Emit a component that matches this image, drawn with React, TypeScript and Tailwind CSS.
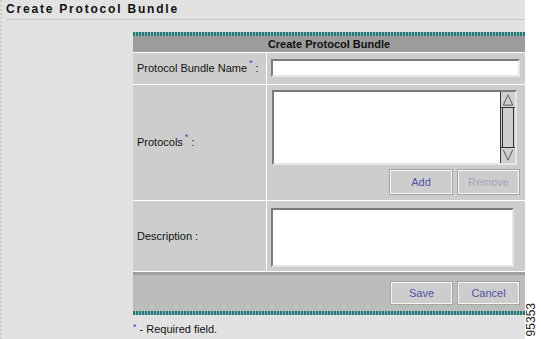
import React from "react";

const tealBar =
  "h-[4px] bg-[repeating-linear-gradient(90deg,#2b7676_0px,#2b7676_2px,#8cbcbc_2px,#8cbcbc_3px)]";

const inset =
  "bg-white border-2 border-t-[#7b7b7b] border-l-[#7b7b7b] border-b-[#e6e6e6] border-r-[#e6e6e6]";

const Req = () => (
  <span className="relative -top-[5px] ml-[2px] text-[9px] leading-none text-[#3a3acf]">*</span>
);

const Btn = ({
  label,
  disabled,
  className,
}: {
  label: string;
  disabled?: boolean;
  className?: string;
}) => (
  <button
    type="button"
    className={`flex items-center justify-center border border-[#a5a5a5] bg-[#cdcdcd] text-[11px] shadow-[inset_1px_1px_0_#f6f6f6,inset_-1px_-1px_0_#f6f6f6] ${
      disabled ? "text-[#a3a3b6]" : "text-[#5252a8]"
    } ${className ?? ""}`}
  >
    {label}
  </button>
);

const Scrollbar = () => (
  <div className="flex h-full w-[15px] flex-col border-l border-[#333] bg-[#cfcfcf]">
    <svg width="14" height="16" viewBox="0 0 14 16" className="border-b border-[#333]">
      <path d="M2 14 L7 3 L12 14 Z" fill="none" stroke="#555" strokeWidth="1" />
    </svg>
    <div className="mx-[1px] flex-1 border-x border-[#333]" />
    <svg width="14" height="16" viewBox="0 0 14 16" className="border-t border-[#333]">
      <path d="M2 2 L7 13 L12 2" fill="none" stroke="#555" strokeWidth="1" />
    </svg>
  </div>
);

export default function App() {
  return (
    <div
      className="flex h-[339px] w-[541px] overflow-hidden bg-white text-[#111]"
      style={{ fontFamily: '"Liberation Sans", Arial, sans-serif' }}
    >
      <div className="flex h-full w-[525px] flex-col border-l-2 border-dotted border-[#cdcdcd] bg-[#e2e2e2]">
        <div className="ml-[4px] h-[20px] border-b border-[#c6c6c6] pt-[2px] text-[12px] font-bold leading-[14px] tracking-[1.8px]">
          Create Protocol Bundle
        </div>

        <div className="ml-[131px] mt-[12px] flex w-[392px] flex-col">
          <div className={tealBar} />
          <div className="flex h-[16px] items-center justify-center bg-[#9c9c9c] text-[11px] font-bold text-[#111]">
            Create Protocol Bundle
          </div>
          <div className="grid grid-cols-[133px_258px] gap-[1px] bg-white pt-[1px]">
            <div className="flex h-[31px] items-center bg-[#cdcdcd] pl-[4px] text-[11px]">
              Protocol Bundle Name
              <Req />
              <span className="ml-[3px]">:</span>
            </div>
            <div className="h-[31px] bg-[#cdcdcd] pl-[4px] pt-[6px]">
              <div className={`h-[18px] w-[249px] ${inset}`} />
            </div>

            <div className="flex h-[115px] items-center bg-[#cdcdcd] pl-[4px] text-[11px]">
              Protocols
              <Req />
              <span className="ml-[3px]">:</span>
            </div>
            <div className="flex h-[115px] flex-col bg-[#cdcdcd] pl-[5px] pt-[5px]">
              <div className={`flex h-[75px] w-[245px] justify-end ${inset}`}>
                <Scrollbar />
              </div>
              <div className="mt-[4px] flex w-[248px] justify-end gap-[4px]">
                <Btn label="Add" className="h-[26px] w-[64px]" />
                <Btn label="Remove" disabled className="h-[26px] w-[63px]" />
              </div>
            </div>

            <div className="flex h-[70px] items-center bg-[#cdcdcd] pl-[4px] text-[11px]">
              Description :
            </div>
            <div className="h-[70px] bg-[#cdcdcd] pl-[4px] pt-[7px]">
              <div className={`h-[59px] w-[243px] ${inset}`} />
            </div>
          </div>
          <div className="h-[1px] bg-white" />
          <div className="h-[3px] bg-[#9f9f9f]" />
          <div className="flex h-[36px] items-center justify-end gap-[4px] bg-[#bcbcbc] pr-[5px]">
            <Btn label="Save" className="h-[24px] w-[63px]" />
            <Btn label="Cancel" className="h-[24px] w-[63px]" />
          </div>
          <div className={tealBar} />
          <div className="mt-[6px] flex items-center text-[11px]">
            <span className="relative -top-[2px] mr-[3px] text-[9px] text-[#3a3acf]">*</span>- Required field.
          </div>
        </div>
      </div>
      <div className="flex h-full w-[16px] flex-col justify-end pb-[3px]">
        <span className="rotate-180 text-[12px] leading-[12px] text-[#222] [writing-mode:vertical-rl]">
          95353
        </span>
      </div>
    </div>
  );
}
